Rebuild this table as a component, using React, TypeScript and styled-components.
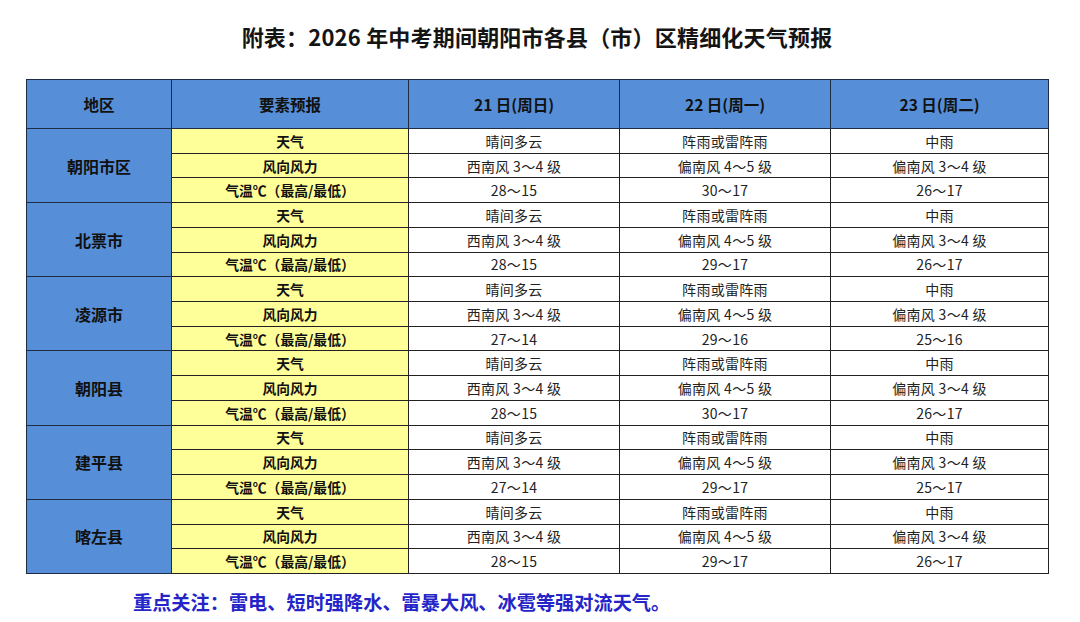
import React from "react";
import styled, { createGlobalStyle } from "styled-components";

const Global = createGlobalStyle`
  html, body { margin: 0; padding: 0; background: #ffffff; }
  body { font-family: "Noto Sans CJK SC", "Noto Sans", sans-serif; color: #111; }
`;

const Page = styled.div`
  width: 1080px;
  height: 622px;
  box-sizing: border-box;
  padding: 22px 0 0 26px;
  display: flex;
  flex-direction: column;
`;

const Title = styled.h1`
  margin: 0;
  width: 1022px;
  text-align: center;
  font-size: 22px;
  line-height: 28px;
  font-weight: 700;
  color: #141414;
  letter-spacing: 0.2px;
`;

const Table = styled.table`
  margin-top: 29px;
  width: 1023px;
  border-collapse: collapse;
  table-layout: fixed;
  font-size: 14px;
`;

const HeadCell = styled.th`
  background: #568fd7;
  border: 1px solid #1e2b44;
  height: 48px;
  padding: 0;
  font-weight: 700;
  font-size: 15.5px;
  color: #111;
  text-align: center;
`;

const RegionCell = styled.td`
  background: #568fd7;
  border: 1px solid #1e2b44;
  padding: 0;
  font-weight: 700;
  font-size: 16px;
  text-align: center;
  color: #111;
`;

const LabelCell = styled.td`
  background: #ffff99;
  border: 1px solid #222;
  padding: 0;
  font-weight: 700;
  font-size: 13.8px;
  text-align: center;
  color: #111;
`;

const DataCell = styled.td`
  background: #fff;
  border: 1px solid #222;
  padding: 0;
  font-size: 14px;
  font-weight: 400;
  text-align: center;
  color: #222;
  letter-spacing: 0.3px;
`;

const Row = styled.tr`
  height: 24.72px;
  line-height: 20px;
`;

const Note = styled.p`
  margin: 16px 0 0 107px;
  font-size: 19.2px;
  font-weight: 700;
  color: #2424c8;
  line-height: 24px;
`;

type Region = {
  name: string;
  weather: [string, string, string];
  wind: [string, string, string];
  temp: [string, string, string];
};

const regions: Region[] = [
  { name: "朝阳市区", weather: ["晴间多云", "阵雨或雷阵雨", "中雨"], wind: ["西南风 3～4 级", "偏南风 4～5 级", "偏南风 3～4 级"], temp: ["28～15", "30～17", "26～17"] },
  { name: "北票市", weather: ["晴间多云", "阵雨或雷阵雨", "中雨"], wind: ["西南风 3～4 级", "偏南风 4～5 级", "偏南风 3～4 级"], temp: ["28～15", "29～17", "26～17"] },
  { name: "凌源市", weather: ["晴间多云", "阵雨或雷阵雨", "中雨"], wind: ["西南风 3～4 级", "偏南风 4～5 级", "偏南风 3～4 级"], temp: ["27～14", "29～16", "25～16"] },
  { name: "朝阳县", weather: ["晴间多云", "阵雨或雷阵雨", "中雨"], wind: ["西南风 3～4 级", "偏南风 4～5 级", "偏南风 3～4 级"], temp: ["28～15", "30～17", "26～17"] },
  { name: "建平县", weather: ["晴间多云", "阵雨或雷阵雨", "中雨"], wind: ["西南风 3～4 级", "偏南风 4～5 级", "偏南风 3～4 级"], temp: ["27～14", "29～17", "25～17"] },
  { name: "喀左县", weather: ["晴间多云", "阵雨或雷阵雨", "中雨"], wind: ["西南风 3～4 级", "偏南风 4～5 级", "偏南风 3～4 级"], temp: ["28～15", "29～17", "26～17"] },
];

export default function App() {
  return (
    <>
      <Global />
      <Page>
        <Title>附表：2026 年中考期间朝阳市各县（市）区精细化天气预报</Title>
        <Table>
          <colgroup>
            <col style={{ width: 145 }} />
            <col style={{ width: 237 }} />
            <col style={{ width: 211 }} />
            <col style={{ width: 211 }} />
            <col style={{ width: 218 }} />
          </colgroup>
          <thead>
            <tr>
              <HeadCell>地区</HeadCell>
              <HeadCell>要素预报</HeadCell>
              <HeadCell>21 日(周日)</HeadCell>
              <HeadCell>22 日(周一)</HeadCell>
              <HeadCell>23 日(周二)</HeadCell>
            </tr>
          </thead>
          <tbody>
            {regions.map((r) => (
              <React.Fragment key={r.name}>
                <Row>
                  <RegionCell rowSpan={3}>{r.name}</RegionCell>
                  <LabelCell>天气</LabelCell>
                  {r.weather.map((v, i) => (
                    <DataCell key={i}>{v}</DataCell>
                  ))}
                </Row>
                <Row>
                  <LabelCell>风向风力</LabelCell>
                  {r.wind.map((v, i) => (
                    <DataCell key={i}>{v}</DataCell>
                  ))}
                </Row>
                <Row>
                  <LabelCell>气温℃（最高/最低）</LabelCell>
                  {r.temp.map((v, i) => (
                    <DataCell key={i}>{v}</DataCell>
                  ))}
                </Row>
              </React.Fragment>
            ))}
          </tbody>
        </Table>
        <Note>重点关注：雷电、短时强降水、雷暴大风、冰雹等强对流天气。</Note>
      </Page>
    </>
  );
}
